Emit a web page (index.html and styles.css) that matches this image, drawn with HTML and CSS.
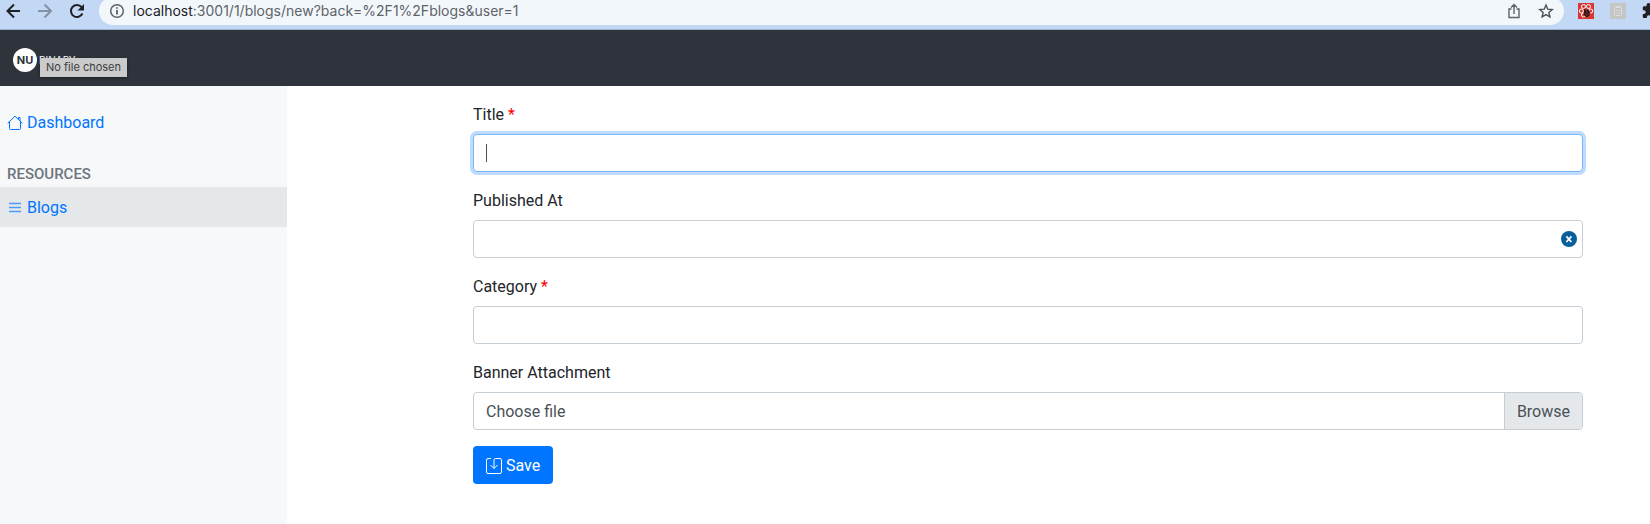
FILE: index.html
```html
<!DOCTYPE html>
<html lang="en">
<head>
<meta charset="utf-8">
<title>New Blog</title>
<link rel="stylesheet" href="styles.css">
</head>
<body>
<div class="toolbar">
  <div class="history">
    <button class="icon-btn" aria-label="Back"><svg width="16" height="16" viewBox="0 0 16 16" fill="none" stroke="#202124" stroke-width="2"><path d="M14 8H2M8 1.500 1.500 8 8 14.500"/></svg></button>
    <button class="icon-btn" aria-label="Forward"><svg width="16" height="16" viewBox="0 0 16 16" fill="none" stroke="#8491a5" stroke-width="2"><path d="M0 8h12M6.500 1.500 13 8l-6.500 6.500"/></svg></button>
    <button class="icon-btn" aria-label="Reload"><svg width="16" height="16" viewBox="0 0 16 16"><path d="M12.400 10.500A6 6 0 1 1 11.600 4.200L12.700 5.300" fill="none" stroke="#202124" stroke-width="2"/><path d="M14 1v6.500H7.500z" fill="#202124"/></svg></button>
  </div>
  <div class="address">
    <svg width="16" height="16" viewBox="0 0 16 16" fill="none" stroke="#5f6368" stroke-width="1.500"><circle cx="8" cy="8" r="6.300"/><path d="M8 7v4.500M8 4.200v1.600" stroke-width="1.800"/></svg>
    <span class="url"><span class="host">localhost</span>:3001/1/blogs/new?back=%2F1%2Fblogs&amp;user=1</span>
    <button class="icon-btn" aria-label="Share"><svg width="16" height="16" viewBox="0 0 16 16" fill="none" stroke="#5f6368" stroke-width="1.400"><path d="M5.500 6H3v8.500h10V6h-2.500M8 11V2M5 4.500l3-3 3 3"/></svg></button>
    <button class="icon-btn" aria-label="Bookmark"><svg width="16" height="16" viewBox="0 0 16 16" fill="none" stroke="#4d5156" stroke-width="1.400"><path d="m8 2 1.750 4.150 4.500.400-3.400 2.950 1.050 4.400L8 11.550 4.100 13.900l1.050-4.400-3.400-2.950 4.500-.4z"/></svg></button>
  </div>
  <div class="extensions">
    <svg width="16" height="16" viewBox="0 0 16 16"><path fill="#d93732" d="M0 0h16v16H0z"/><g fill="none" stroke="#fff"><circle cx="5.500" cy="3.500" r="2"/><circle cx="10.500" cy="3.500" r="2"/><circle cx="3.300" cy="8" r="2"/><circle cx="12.700" cy="8" r="2"/><circle cx="5.500" cy="12" r="2"/></g><path d="m6.500 5.500 2 2 1-1.500 1.500 1.500 1 2-.5 3-2 1.500-2.500-.5-1.500-2.500z" fill="#2b1515"/><path d="m8 8 3 4M7 10l2 3" stroke="#d93732" stroke-width=".6"/></svg>
    <svg width="16" height="16" viewBox="0 0 16 16"><rect width="16" height="16" rx="1" fill="#c5c5c5"/><g fill="none" stroke="#dedede"><rect x="4.500" y="3.500" width="7" height="9" rx="1"/><path d="M6 4.500h4M6 7.500h1.500M8.500 7.500H10M6 10h1.500M8.500 10H10"/></g></svg>
    <svg width="16" height="16" viewBox="0 0 16 16"><path fill="#202124" d="M13.500 7.500h-1V4.600c0-.8-.6-1.400-1.400-1.400H8.500V2a2 2 0 0 0-4 0v1.200H2.200C1.400 3.200.8 3.800.8 4.600v2.600h1a1.900 1.900 0 0 1 0 3.800h-1v2.700c0 .8.600 1.400 1.400 1.400h2.700v-1a1.900 1.900 0 0 1 3.800 0v1h2.600c.8 0 1.400-.6 1.400-1.400v-2.500h1a1.900 1.900 0 0 0 0-3.700z"/></svg>
  </div>
</div>
<header class="navbar">
  <a class="brand" href="#"><span class="brand-mark">NU</span><span class="brand-name">BINARY</span></a>
  <div class="tooltip" role="tooltip">No file chosen</div>
</header>
<div class="layout">
  <nav class="sidebar">
    <a class="nav-link" href="#"><svg width="16" height="16" viewBox="0 0 16 16" fill="none" stroke="#0075ff"><path d="M2.500 7v6.500q0 1 1 1h9q1 0 1-1V7M.7 8.300 8 1.200l7.300 7.100M11.500 4V2.500h1.500V6"/></svg>Dashboard</a>
    <h6 class="nav-heading">Resources</h6>
    <a class="nav-link active" href="#"><svg width="16" height="16" viewBox="0 0 16 16" fill="none" stroke="#4c9bfa" stroke-width="1.300"><path d="M2 3.500h12M2 7.500h12M2 11.500h12"/></svg>Blogs</a>
  </nav>
  <main class="content">
    <form>
      <div class="field"><label for="title">Title <span class="required">*</span></label><div class="control focused"><input id="title" type="text"></div></div>
      <div class="field"><label for="published">Published At</label><div class="control"><input id="published" type="text"><button class="clear" type="button" aria-label="Clear"><svg width="16" height="16" viewBox="0 0 16 16"><circle cx="8" cy="8" r="8" fill="#08609b"/><path d="m5.400 5.400 5 5.600M10.400 5.400l-5 5.600" stroke="#fff" stroke-width="1.700"/></svg></button></div></div>
      <div class="field"><label for="category">Category <span class="required">*</span></label><div class="control"><input id="category" type="text"></div></div>
      <div class="field"><label for="banner">Banner Attachment</label><div class="control"><span class="file-name">Choose file</span><button class="browse" id="banner" type="button">Browse</button></div></div>
      <button class="save" type="button"><svg width="16" height="16" viewBox="0 0 16 16" fill="none" stroke="#fff"><path d="M5 .5H2Q.5.500.5 2v12q0 1.500 1.500 1.500h12q1.500 0 1.500-1.500V2Q15.500.5 14 .5H9.500Q8 .5 8 2v8.500M4.500 7 8 10.500 11.500 7"/></svg>Save</button>
    </form>
  </main>
</div>
</body>
</html>
```
FILE: styles.css
```css
* { box-sizing: border-box; }
body { margin: 0; background: #fff; color: #212529; font: 16px/24px Roboto, sans-serif; overflow: hidden; }
a { text-decoration: none; }
button, input { font: inherit; color: inherit; }
button { padding: 0; border: 0; background: none; }
svg { display: block; flex: none; overflow: visible; }
.toolbar { display: flex; height: 30px; background: #c3d8f5; border-bottom: 1px solid #9cb2cf; overflow: hidden; }
.history { display: flex; gap: 16px; padding: 3px 6px; width: 99px; }
.icon-btn { display: block; width: 16px; height: 16px; }
.address { flex: 1; display: flex; align-items: center; gap: 16px; height: 28px; margin-top: -3px; padding: 0 10px; border-radius: 14px; background: #f2f7fc; color: #5f6368; font: 14px/24px Inter, sans-serif; }
.url { flex: 1; margin-left: -8px; }
.host { color: #202124; }
.extensions { display: flex; gap: 16px; width: 86px; padding: 3px 0 0 14px; }
.navbar { position: relative; display: flex; align-items: center; height: 56px; padding: 4px 13px 0; background: #2f333b; }
.brand { display: flex; align-items: center; gap: 2px; color: #fff; }
.brand-mark { width: 24px; height: 24px; border-radius: 50%; background: #fff; color: #2f333b; font: 700 11px/24px Inter, sans-serif; text-align: center; }
.brand-name { font: 10px/20px Inter, sans-serif; }
.tooltip { position: absolute; left: 40px; top: 28px; padding: 0 6px; background: #cbcbcb; color: #3c3d3e; font: 11px/19px Inter, sans-serif; box-shadow: 0 1px 3px #0006; }
.layout { display: flex; min-height: calc(100vh - 86px); }
.sidebar { width: 287px; padding-top: 16px; background: #f7f8fa; }
.nav-link { display: flex; align-items: center; gap: 4px; padding: 9px 7px 7px; color: #0075ff; }
.nav-link.active { background: #e4e8eb; }
.nav-heading { margin: 24px 7px 4px; color: #6c757d; font-size: 15px; line-height: 17px; font-weight: 500; text-transform: uppercase; }
.content { flex: 1; padding: 17px 67px 16px 186px; }
.field { margin-bottom: 17px; }
.field label { display: block; margin-bottom: 7px; }
.required { color: #f00; }
.control { display: flex; align-items: center; height: 38px; border: 1px solid #c6ced5; border-radius: 4px; background: #fff; color: #495057; overflow: hidden; }
.control input { flex: 1; height: 100%; padding: 0 12px; border: 0; outline: 0; background: none; }
.control.focused { border-color: #78b8fb; box-shadow: 0 0 0 3px #bfdcfe; }
.control.focused::before { content: ""; width: 1px; height: 18px; margin-left: 12px; background: #495057; }
.clear { margin-right: 5px; }
.file-name { flex: 1; padding: 2px 12px 0; }
.browse { align-self: stretch; padding: 2px 12px 0; border-left: 1px solid #c6ced5; background: #e5e8eb; }
.save { display: flex; align-items: center; gap: 4px; height: 38px; margin-top: -1px; padding: 2px 13px 0; border-radius: 4px; background: #0075ff; color: #fff; }
```
